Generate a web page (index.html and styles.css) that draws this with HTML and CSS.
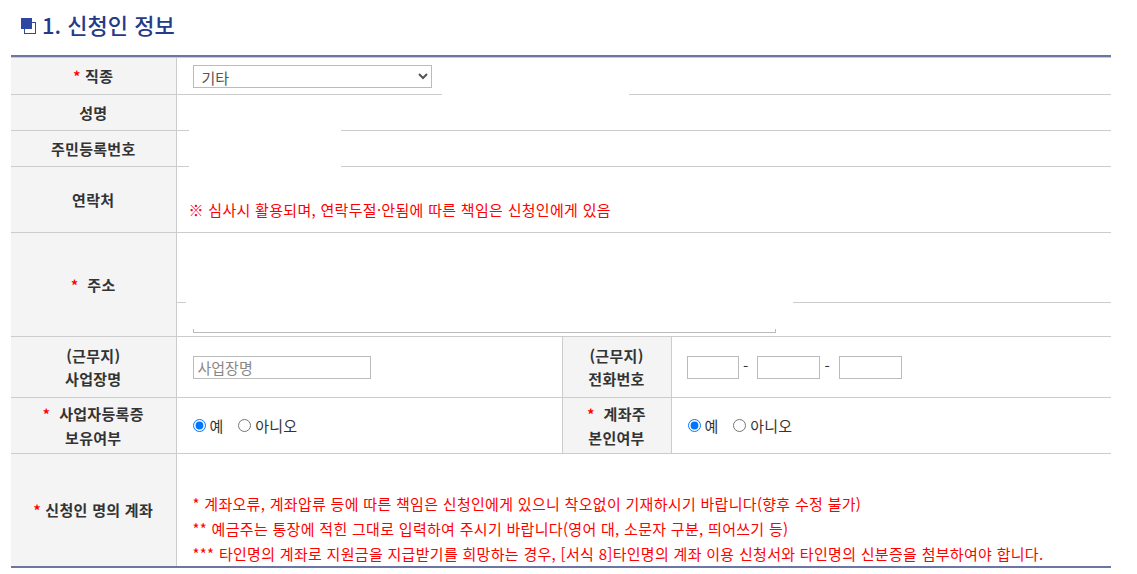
FILE: index.html
```html
<!DOCTYPE html>
<html lang="ko">
<head>
    <meta charset="UTF-8">
    <meta name="viewport" content="width=device-width, initial-scale=1.0">
    <title>신청인 정보</title>
    <link rel="stylesheet" href="styles.css">
</head>
<body>

    <div id="form-section">
        <h3 class="section-title">
            <span class="title-icon"><span class="icon-back"></span><span class="icon-front"></span></span>
            1. 신청인 정보
        </h3>

        <div class="form-box">
            <table class="form-table">
                <colgroup>
                    <col class="col-label">
                    <col class="col-value">
                    <col class="col-label2">
                    <col class="col-value2">
                </colgroup>
                <tr class="row-job">
                    <th><span class="req">*</span> 직종</th>
                    <td colspan="3">
                        <select class="job-select">
                            <option>기타</option>
                        </select><span class="cover cover-job"></span>
                    </td>
                </tr>
                <tr class="row-name">
                    <th>성명</th>
                    <td colspan="3"></td>
                </tr>
                <tr class="row-id">
                    <th>주민등록번호</th>
                    <td colspan="3"><div class="cover-id"></div></td>
                </tr>
                <tr class="row-contact">
                    <th>연락처</th>
                    <td colspan="3">
                        <p class="note">※ 심사시 활용되며, 연락두절·안됨에 따른 책임은 신청인에게 있음</p>
                    </td>
                </tr>
                <tr class="row-addr">
                    <th><span class="req">*</span>&nbsp; 주소</th>
                    <td colspan="3" class="addr-cell">
                        <div class="addr-line">
                            <span class="seg seg-left"></span>
                            <span class="seg seg-right"></span>
                        </div>
                        <div class="addr-input"></div>
                    </td>
                </tr>
                <tr class="row-work">
                    <th>(근무지)<br>사업장명</th>
                    <td><input type="text" class="txt txt-company" placeholder="사업장명"></td>
                    <th>(근무지)<br>전화번호</th>
                    <td>
                        <input type="text" class="txt txt-tel1"> -
                        <input type="text" class="txt txt-tel2"> -
                        <input type="text" class="txt txt-tel3">
                    </td>
                </tr>
                <tr class="row-radio">
                    <th><span class="req">*</span>&nbsp; 사업자등록증<br>보유여부</th>
                    <td>
                        <label><input type="radio" name="biz" checked>예</label>
                        <label><input type="radio" name="biz">아니오</label>
                    </td>
                    <th><span class="req">*</span>&nbsp; 계좌주<br>본인여부</th>
                    <td>
                        <label><input type="radio" name="owner" checked>예</label>
                        <label><input type="radio" name="owner">아니오</label>
                    </td>
                </tr>
                <tr class="row-account">
                    <th><span class="req">*</span> 신청인 명의 계좌</th>
                    <td colspan="3">
                        <div class="account-notes">
                            <p>* 계좌오류, 계좌압류 등에 따른 책임은 신청인에게 있으니 착오없이 기재하시기 바랍니다(향후 수정 불가)</p>
                            <p>** 예금주는 통장에 적힌 그대로 입력하여 주시기 바랍니다(영어 대, 소문자 구분, 띄어쓰기 등)</p>
                            <p>*** 타인명의 계좌로 지원금을 지급받기를 희망하는 경우, [서식 8]타인명의 계좌 이용 신청서와 타인명의 신분증을 첨부하여야 합니다.</p>
                        </div>
                    </td>
                </tr>
            </table>
        </div>
    </div>

</body>
</html>
```

FILE: styles.css
```css
body {
    margin: 0;
    font-family: 'Noto Sans CJK KR', 'Noto Sans', sans-serif;
    font-size: 15px;
    letter-spacing: 0.3px;
    color: #333;
    background-color: #fff;
}

#form-section {
    width: 1100px;
    padding: 0 0 0 11px;
}

.section-title {
    display: flex;
    align-items: center;
    margin: 0;
    padding: 0 0 7px 10px;
    height: 55px;
    box-sizing: border-box;
    font-size: 22px;
    font-weight: 500;
    line-height: 30px;
    color: #263a8a;
    letter-spacing: 0;
}

.title-icon {
    position: relative;
    display: inline-block;
    width: 15px;
    height: 16px;
    margin-right: 6px;
    margin-top: 3px;
}

.icon-back {
    position: absolute;
    left: 3px;
    top: 4px;
    width: 10px;
    height: 10px;
    border: 1.5px solid #2d47a3;
    background-color: #fff;
}

.icon-front {
    position: absolute;
    left: 0;
    top: 0;
    width: 11px;
    height: 11px;
    background-color: #2d47a3;
}

.form-box {
    border-top: 2px solid #6c76a5;
    border-bottom: 2px solid #6c76a5;
}

.form-table {
    width: 100%;
    border-collapse: collapse;
    table-layout: fixed;
}

.col-label { width: 165px; }
.col-value { width: 386px; }
.col-label2 { width: 109px; }

.form-table th,
.form-table td {
    border: 1px solid #ccc;
    padding: 0;
}

.form-table tr th:first-child,
.form-table tr td:first-child {
    border-left: none;
}

.form-table tr td:last-child {
    border-right: none;
}

.form-table tr:last-child th,
.form-table tr:last-child td {
    border-bottom: none;
}

.form-table th {
    background-color: #f4f4f4;
    font-weight: 700;
    color: #333;
    text-align: center;
    line-height: 23px;
}

.form-table td {
    padding-left: 12px;
    vertical-align: middle;
}

.req {
    color: #f00;
    font-weight: 700;
    font-size: 14px;
}

.row-job th { height: 36px; }
.row-name th { height: 35px; }
.row-id th { height: 35px; }
.row-contact th { height: 65px; }
.row-addr th { height: 103px; }
.row-work th { height: 60px; }
.row-radio th { height: 55px; }
.row-account th { height: 112px; }

.job-select {
    width: 239px;
    height: 23px;
    margin-left: 4px;
    padding: 0 4px;
    border: 1px solid #bbb;
    border-radius: 0;
    background-color: #fff;
    font-family: inherit;
    font-size: 15px;
    color: #555;
    vertical-align: middle;
}

.cover {
    display: inline-block;
    position: relative;
    background-color: #fff;
    vertical-align: middle;
}

.cover-job {
    width: 187px;
    height: 12px;
    margin-left: 10px;
    top: 18px;
}

.cover-id {
    position: relative;
    width: 152px;
    height: 40px;
    margin: -4px 0;
    background-color: #fff;
}

.note {
    margin: 20px 0 0;
    color: #f00;
    line-height: 20px;
}

.addr-cell {
    vertical-align: top;
}

.form-table td.addr-cell {
    padding: 0;
}

.addr-line {
    display: flex;
    justify-content: space-between;
    height: 66px;
}

.seg {
    display: block;
    border-bottom: 1px solid #ccc;
}

.seg-left { width: 9px; }
.seg-right { width: 318px; }

.addr-input {
    width: 581px;
    height: 3px;
    margin: 26px 0 0 16px;
    border: 1px solid #bbb;
    border-top: none;
}

.txt {
    height: 23px;
    box-sizing: border-box;
    margin: 0;
    padding: 0 4px;
    border: 1px solid #bbb;
    font-family: inherit;
    font-size: 15px;
    color: #333;
    vertical-align: middle;
}

.txt::placeholder {
    color: #888;
}

.txt-company {
    width: 178px;
    margin-left: 4px;
}

.txt-tel1 {
    width: 52px;
    margin-left: 3px;
}

.txt-tel2,
.txt-tel3 {
    width: 63px;
    margin-left: 4px;
}

.row-radio label {
    display: inline-flex;
    align-items: center;
    margin-right: 6px;
    line-height: 20px;
}

.row-radio input[type="radio"] {
    margin: 0 4px 0 4px;
    width: 13px;
    height: 13px;
}

.account-notes {
    padding-top: 36px;
}

.account-notes p {
    margin: 0;
    color: #f00;
    line-height: 25px;
    padding-left: 4px;
}
```
